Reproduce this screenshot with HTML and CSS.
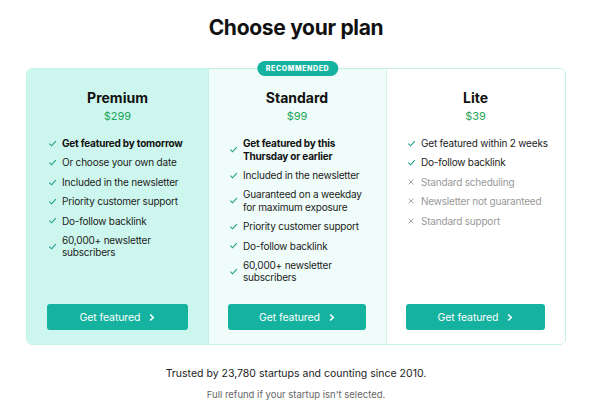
FILE: index.html
```html
<!DOCTYPE html>
<html lang="en">
<head>
  <meta charset="UTF-8">
  <title>Choose your plan</title>
  <link rel="stylesheet" href="styles.css">
</head>
<body>

  <div class="page">
    <h1>Choose your plan</h1>

    <div class="plans">
      <div class="plan premium">
        <h2>Premium</h2>
        <div class="price">$299</div>
        <ul>
          <li class="strong"><svg class="ico" viewBox="0 0 10 10"><path d="M1.5 5.2 L4 7.6 L8.7 2.4"/></svg><span>Get featured by tomorrow</span></li>
          <li><svg class="ico" viewBox="0 0 10 10"><path d="M1.5 5.2 L4 7.6 L8.7 2.4"/></svg><span>Or choose your own date</span></li>
          <li><svg class="ico" viewBox="0 0 10 10"><path d="M1.5 5.2 L4 7.6 L8.7 2.4"/></svg><span>Included in the newsletter</span></li>
          <li><svg class="ico" viewBox="0 0 10 10"><path d="M1.5 5.2 L4 7.6 L8.7 2.4"/></svg><span>Priority customer support</span></li>
          <li><svg class="ico" viewBox="0 0 10 10"><path d="M1.5 5.2 L4 7.6 L8.7 2.4"/></svg><span>Do-follow backlink</span></li>
          <li><svg class="ico" viewBox="0 0 10 10"><path d="M1.5 5.2 L4 7.6 L8.7 2.4"/></svg><span>60,000+ newsletter<br>subscribers</span></li>
        </ul>
        <button>Get featured <svg class="chev" viewBox="0 0 8 10"><path d="M2.5 1.5 L6 5 L2.5 8.5"/></svg></button>
      </div>

      <div class="plan standard">
        <span class="badge">Recommended</span>
        <h2>Standard</h2>
        <div class="price">$99</div>
        <ul>
          <li class="strong"><svg class="ico" viewBox="0 0 10 10"><path d="M1.5 5.2 L4 7.6 L8.7 2.4"/></svg><span>Get featured by this<br>Thursday or earlier</span></li>
          <li><svg class="ico" viewBox="0 0 10 10"><path d="M1.5 5.2 L4 7.6 L8.7 2.4"/></svg><span>Included in the newsletter</span></li>
          <li><svg class="ico" viewBox="0 0 10 10"><path d="M1.5 5.2 L4 7.6 L8.7 2.4"/></svg><span>Guaranteed on a weekday<br>for maximum exposure</span></li>
          <li><svg class="ico" viewBox="0 0 10 10"><path d="M1.5 5.2 L4 7.6 L8.7 2.4"/></svg><span>Priority customer support</span></li>
          <li><svg class="ico" viewBox="0 0 10 10"><path d="M1.5 5.2 L4 7.6 L8.7 2.4"/></svg><span>Do-follow backlink</span></li>
          <li><svg class="ico" viewBox="0 0 10 10"><path d="M1.5 5.2 L4 7.6 L8.7 2.4"/></svg><span>60,000+ newsletter<br>subscribers</span></li>
        </ul>
        <button>Get featured <svg class="chev" viewBox="0 0 8 10"><path d="M2.5 1.5 L6 5 L2.5 8.5"/></svg></button>
      </div>

      <div class="plan lite">
        <h2>Lite</h2>
        <div class="price">$39</div>
        <ul>
          <li><svg class="ico" viewBox="0 0 10 10"><path d="M1.5 5.2 L4 7.6 L8.7 2.4"/></svg><span>Get featured within 2 weeks</span></li>
          <li><svg class="ico" viewBox="0 0 10 10"><path d="M1.5 5.2 L4 7.6 L8.7 2.4"/></svg><span>Do-follow backlink</span></li>
          <li class="off"><svg class="ico" viewBox="0 0 10 10"><path d="M2 2 L8 8 M8 2 L2 8"/></svg><span>Standard scheduling</span></li>
          <li class="off"><svg class="ico" viewBox="0 0 10 10"><path d="M2 2 L8 8 M8 2 L2 8"/></svg><span>Newsletter not guaranteed</span></li>
          <li class="off"><svg class="ico" viewBox="0 0 10 10"><path d="M2 2 L8 8 M8 2 L2 8"/></svg><span>Standard support</span></li>
        </ul>
        <button>Get featured <svg class="chev" viewBox="0 0 8 10"><path d="M2.5 1.5 L6 5 L2.5 8.5"/></svg></button>
      </div>
    </div>

    <p class="trusted">Trusted by 23,780 startups and counting since 2010.</p>
    <p class="refund">Full refund if your startup isn't selected.</p>
  </div>

</body>
</html>
```

FILE: styles.css
```css
body {
  margin: 0;
  font-family: Inter, "Noto Sans", sans-serif;
  color: #111;
  background-color: #fff;
}

.page {
  width: 540px;
  margin-left: 26px;
  padding-top: 13px;
}

h1 {
  margin: 0;
  text-align: center;
  font-size: 21px;
  line-height: 30px;
  font-weight: 700;
  letter-spacing: -0.3px;
}

.plans {
  display: grid;
  grid-template-columns: 181px 179px minmax(0, 1fr);
  margin-top: 25px;
  border: 1px solid #c4f1e6;
  border-radius: 6px;
  height: 277px;
  box-sizing: border-box;
}

.plan {
  position: relative;
  display: flex;
  flex-direction: column;
  min-width: 0;
  padding: 19px 20px 14px 20px;
}

.premium {
  background-color: #cdf7ee;
  border-radius: 5px 0 0 5px;
}

.standard {
  background-color: #effcf9;
  border-left: 1px solid #c4f1e6;
  border-right: 1px solid #d6f4ec;
  padding-left: 19px;
}

.lite {
  background-color: #fff;
  border-radius: 0 5px 5px 0;
  padding-left: 19px;
}

.badge {
  position: absolute;
  top: -8px;
  left: 50%;
  transform: translateX(-50%);
  background-color: #14b29f;
  color: #fff;
  font-size: 7px;
  font-weight: 800;
  letter-spacing: 0.6px;
  text-transform: uppercase;
  line-height: 15px;
  padding: 0 9px;
  border-radius: 8px;
  white-space: nowrap;
}

h2 {
  margin: 0;
  text-align: center;
  font-size: 14px;
  line-height: 20px;
  font-weight: 700;
}

.price {
  text-align: center;
  color: #1ea55a;
  font-size: 11px;
  line-height: 16px;
}

ul {
  list-style: none;
  margin: 13px 0 0 0;
  padding: 0 0 0 1px;
}

li {
  display: flex;
  align-items: center;
  gap: 5px;
  font-size: 10px;
  letter-spacing: -0.2px;
  line-height: 12.5px;
  color: #222;
  margin-bottom: 6.9px;
  white-space: nowrap;
}

li.strong {
  font-weight: 700;
  color: #111;
}

li.off {
  color: #999;
}

.ico {
  width: 9px;
  height: 9px;
  flex-shrink: 0;
  fill: none;
  stroke: #1a9e88;
  stroke-width: 1.2;
}

li.off .ico {
  stroke: #a3a3a3;
  width: 8px;
  height: 8px;
  margin-right: 1px;
}

button {
  margin-top: auto;
  height: 26px;
  border: none;
  border-radius: 3px;
  background-color: #14b29f;
  color: #fff;
  font-family: inherit;
  font-size: 10.5px;
  letter-spacing: -0.1px;
  display: flex;
  align-items: center;
  justify-content: center;
  gap: 8px;
  cursor: pointer;
}

.chev {
  width: 7px;
  height: 9px;
  fill: none;
  stroke: #fff;
  stroke-width: 1.8;
}

.trusted {
  margin: 21px 0 0 0;
  text-align: center;
  font-size: 10.5px;
  line-height: 16px;
  color: #222;
}

.refund {
  margin: 6px 0 0 0;
  text-align: center;
  font-size: 9.5px;
  line-height: 14px;
  color: #666;
}
```
